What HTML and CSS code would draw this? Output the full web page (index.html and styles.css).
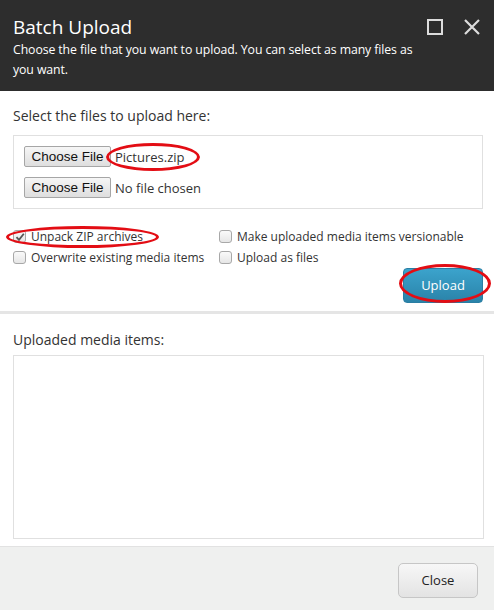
FILE: index.html
```html
<!DOCTYPE html>
<html>
<head>
<meta charset="utf-8">
<link rel="stylesheet" href="styles.css">
</head>
<body>
<div class="dialog">
  <div class="header">
    <div class="titlebar">
      <div class="title">Batch Upload</div>
      <div class="win-icons">
        <svg width="16" height="16" viewBox="0 0 16 16"><rect x="1" y="1" width="14" height="14" fill="none" stroke="#dcdcdc" stroke-width="2"/></svg>
        <svg width="16" height="16" viewBox="0 0 16 16"><path d="M1 1L15 15M15 1L1 15" stroke="#dcdcdc" stroke-width="2.2" fill="none"/></svg>
      </div>
    </div>
    <div class="subtitle">Choose the file that you want to upload. You can select as many files as you want.</div>
  </div>

  <div class="section upload-section">
    <div class="label">Select the files to upload here:</div>
    <div class="filebox">
      <div class="filerow"><span class="filebtn">Choose File</span><span class="filename">Pictures.zip</span></div>
      <div class="filerow"><span class="filebtn">Choose File</span><span class="filename">No file chosen</span></div>
    </div>
    <div class="options">
      <label class="opt"><span class="cb checked"><svg width="10" height="10" viewBox="0 0 10 10"><path d="M1.5 5.2L4 7.8L8.8 1.8" stroke="#555" stroke-width="1.8" fill="none"/></svg></span>Unpack ZIP archives</label>
      <label class="opt"><span class="cb"></span>Make uploaded media items versionable</label>
      <label class="opt"><span class="cb"></span>Overwrite existing media items</label>
      <label class="opt"><span class="cb"></span>Upload as files</label>
    </div>
    <div class="actions"><span class="btn-upload">Upload</span></div>
  </div>

  <div class="section media-section">
    <div class="label">Uploaded media items:</div>
    <div class="mediabox"></div>
  </div>

  <div class="footer"><span class="btn-close">Close</span></div>
</div>

<span class="mark mark-file"></span>
<span class="mark mark-unpack"></span>
<span class="mark mark-upload"></span>
</body>
</html>
```

FILE: styles.css
```css
* { box-sizing: border-box; }
html, body { margin: 0; padding: 0; }
body {
  width: 494px;
  height: 610px;
  overflow: hidden;
  background: #fff;
  font-family: "Open Sans", "Noto Sans", sans-serif;
  color: #333;
  position: relative;
}
.dialog {
  display: flex;
  flex-direction: column;
  height: 610px;
}
.header {
  background: #2d2d2d;
  color: #fff;
  height: 91px;
  padding: 14px 13px 0 13px;
}
.titlebar {
  display: flex;
  justify-content: space-between;
  align-items: flex-start;
}
.title {
  font-size: 19px;
  line-height: 26px;
  color: #fff;
}
.win-icons {
  display: flex;
  gap: 21px;
  padding-top: 5px;
  padding-right: 1px;
}
.win-icons svg { display: block; }
.subtitle {
  font-size: 12.3px;
  line-height: 20px;
  letter-spacing: -0.1px;
  width: 414px;
  color: #fff;
}
.section { padding: 0 10px 0 13px; }
.label {
  font-size: 14px;
  line-height: 20px;
  color: #333;
}
.upload-section {
  padding-top: 15px;
  padding-bottom: 8px;
  border-bottom: 3px solid #e5e5e5;
}
.upload-section .label { margin-bottom: 9px; }
.filebox {
  border: 1px solid #e0e0e0;
  padding: 10px;
  display: flex;
  flex-direction: column;
  gap: 10px;
  margin-right: 1px;
}
.filerow {
  display: flex;
  align-items: center;
  height: 21px;
}
.filebtn {
  font-family: "Liberation Sans", Arial, sans-serif;
  font-size: 13.5px;
  color: #111;
  width: 87px;
  height: 21px;
  line-height: 19px;
  text-align: center;
  border: 1px solid #a6a6a6;
  border-radius: 2px;
  background: linear-gradient(#f6f6f6, #dedede);
}
.filename {
  font-size: 13px;
  margin-left: 4px;
  color: #333;
}
.options {
  margin-top: 17px;
  display: grid;
  grid-template-columns: 206px 1fr;
  font-size: 12px;
  color: #333;
}
.opt {
  display: flex;
  align-items: center;
  height: 21px;
}
.cb {
  width: 13px;
  height: 13px;
  border: 1px solid #a8a8a8;
  border-radius: 3px;
  background: linear-gradient(#fafafa, #e6e6e6);
  margin-right: 5px;
  display: flex;
  align-items: center;
  justify-content: center;
  flex: none;
}
.actions {
  display: flex;
  justify-content: flex-end;
  padding-right: 1px;
}
.btn-upload {
  width: 80px;
  height: 35px;
  text-align: center;
  color: #fff;
  font-size: 13px;
  border-radius: 4px;
  background: linear-gradient(#3ba3cc, #2a83a9);
  border: 1px solid #2a7ea3;
  line-height: 33px;
}
.media-section { padding-top: 16px; }
.media-section .label { margin-bottom: 5px; }
.mediabox {
  height: 184px;
  border: 1px solid #e0e0e0;
}
.footer {
  margin-top: 7px;
  flex: 1;
  background: #eff0ef;
  border-top: 1px solid #e2e2e2;
  display: flex;
  justify-content: flex-end;
  align-items: flex-start;
  padding: 16px 16px 0 0;
}
.btn-close {
  width: 80px;
  height: 35px;
  line-height: 33px;
  text-align: center;
  font-size: 13px;
  color: #222;
  border: 1px solid #c6c6c6;
  border-radius: 5px;
  background: linear-gradient(#f7f7f7, #e3e3e3);
}
.mark {
  position: absolute;
  border: 3px solid #e30d14;
  border-radius: 50%;
  pointer-events: none;
}
.mark-file { left: 106px; top: 143px; width: 94px; height: 28px; }
.mark-unpack { left: 6px; top: 226px; width: 153px; height: 22px; }
.mark-upload { left: 399px; top: 264px; width: 92px; height: 39px; }
```
